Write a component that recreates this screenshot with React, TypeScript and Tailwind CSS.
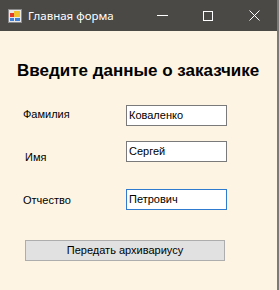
import React from 'react';

const fields = [
  { label: 'Фамилия', value: 'Коваленко', labelTop: 'mt-[2px]', rowTop: 'mt-[25px]', focused: false, labelPad: 'pl-[23px]' },
  { label: 'Имя', value: 'Сергей', labelTop: 'mt-[9px]', rowTop: 'mt-[15px]', focused: false, labelPad: 'pl-[25px]' },
  { label: 'Отчество', value: 'Петрович', labelTop: 'mt-[4px]', rowTop: 'mt-[25px]', focused: true, labelPad: 'pl-[23px]' },
];

function AppIcon() {
  return (
    <svg width="14" height="14" viewBox="0 0 14 14" className="shrink-0">
      <rect x="0.5" y="0.5" width="13" height="13" fill="#e8e8e8" stroke="#8a8a8a" />
      <rect x="2" y="4" width="4" height="4" fill="#e23b2e" />
      <rect x="6" y="2" width="6" height="6" fill="#f2c12e" />
      <rect x="2" y="9" width="4" height="3" fill="#3f7fd6" />
      <rect x="7" y="9" width="5" height="3" fill="#3f7fd6" />
    </svg>
  );
}

export default function App() {
  return (
    <div className="w-[279px] h-[290px] flex flex-col bg-[#fdf4e4] border-r-2 border-[#7a7a78] overflow-hidden">
      <div className="h-[31px] bg-[#4a4946] flex items-center text-white shrink-0">
        <div className="pl-[8px] flex items-center gap-[6px]">
          <AppIcon />
          <span className="text-[11.5px] leading-none" style={{ fontFamily: '"Noto Sans", sans-serif' }}>
            Главная форма
          </span>
        </div>
        <div className="ml-auto flex items-center h-full">
          <div className="w-[46px] h-full flex items-center justify-center">
            <div className="w-[11px] h-px bg-white" />
          </div>
          <div className="w-[46px] h-full flex items-center justify-center">
            <div className="w-[10px] h-[10px] border border-white" />
          </div>
          <div className="w-[46px] h-full flex items-center justify-center">
            <svg width="11" height="11" viewBox="0 0 11 11">
              <path d="M0.5 0.5 L10.5 10.5 M10.5 0.5 L0.5 10.5" stroke="white" strokeWidth="1" />
            </svg>
          </div>
        </div>
      </div>

      <div className="flex-1 flex flex-col text-black" style={{ fontFamily: '"Liberation Sans", Arial, sans-serif' }}>
        <h1 className="mt-[31px] pl-[17px] text-[17px] font-bold leading-[18px]">
          Введите данные о заказчике
        </h1>

        {fields.map((f) => (
          <div key={f.label} className={`flex items-start ${f.rowTop}`}>
            <span className={`w-[126px] ${f.labelPad} ${f.labelTop} text-[11px] leading-[14px]`}>{f.label}</span>
            <div
              className={`w-[101px] h-[21px] bg-white border flex items-center pl-[2px] text-[11px] ${
                f.focused ? 'border-[#2e7bcf]' : 'border-[#7a7a7a]'
              }`}
            >
              {f.value}
            </div>
          </div>
        ))}

        <div className="mt-[30px] pl-[25px]">
          <button className="w-[200px] h-[21px] bg-[#e1e1e1] border border-[#adadad] text-[11px] leading-none flex items-center justify-center">
            Передать архивариусу
          </button>
        </div>
      </div>
    </div>
  );
}
